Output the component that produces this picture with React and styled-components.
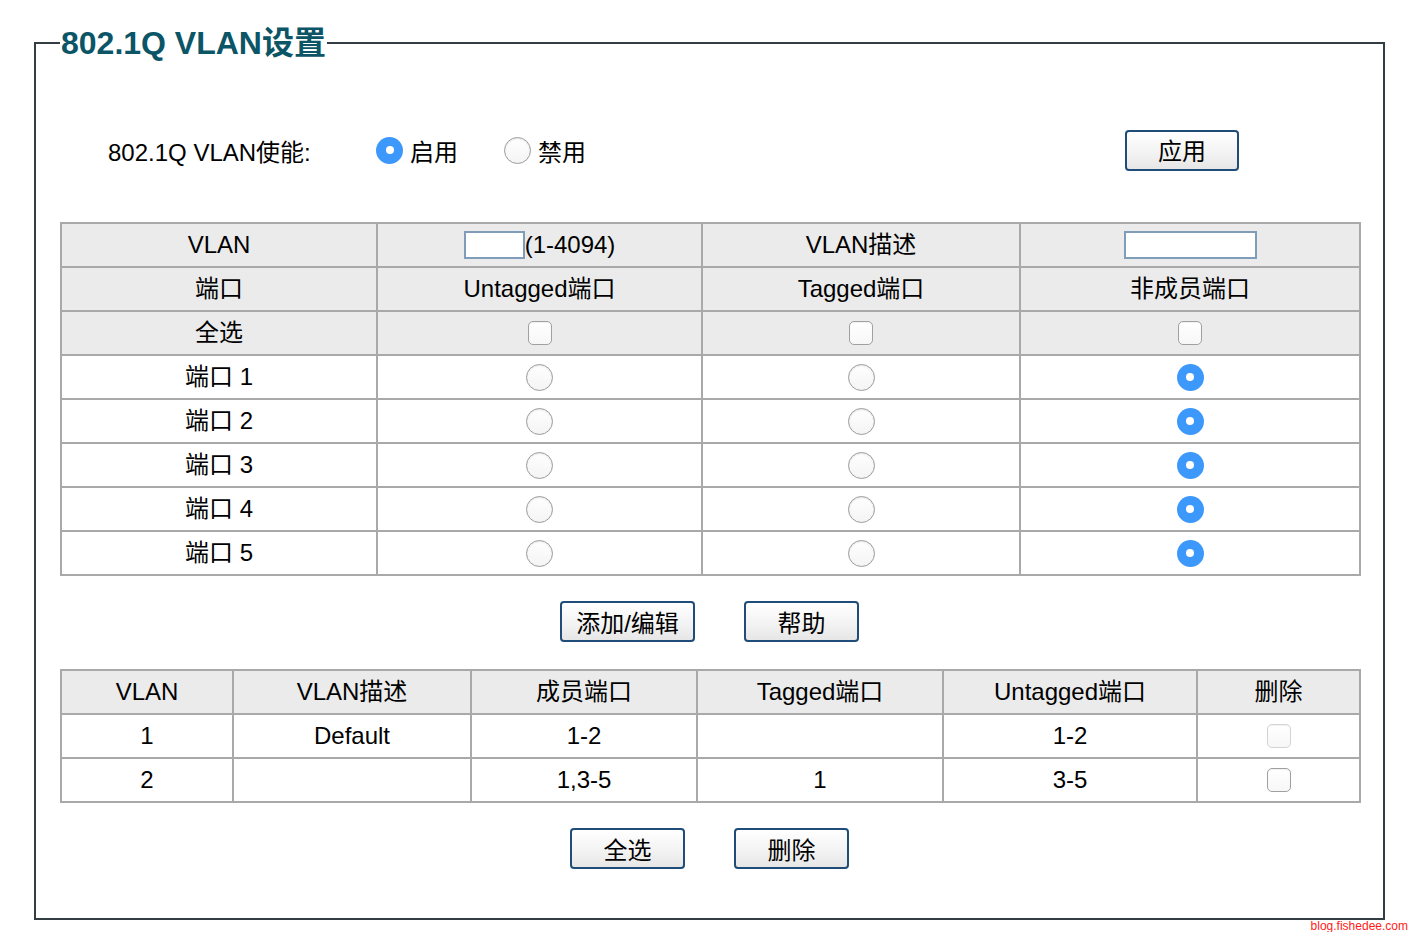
import React from "react";
import styled, { createGlobalStyle } from "styled-components";

const Global = createGlobalStyle`
  html, body { margin: 0; padding: 0; background: #fff; }
  body { font-family: "Liberation Sans", Arial, "Noto Sans CJK SC", sans-serif; color: #000; }
`;

const Page = styled.div`
  width: 1420px;
  padding-top: 23px;
`;

const Frame = styled.fieldset`
  margin: 0 0 0 34px;
  width: 1351px;
  box-sizing: border-box;
  border: 2px solid #333d42;
  padding: 0 24px 49px 24px;
  min-width: 0;
`;

const Legend = styled.legend`
  font-size: 32px;
  font-weight: bold;
  color: #0b5566;
  line-height: 40px;
  padding: 0 1px;
  margin-left: 0;
`;

const EnableRow = styled.div`
  display: flex;
  align-items: center;
  height: 44px;
  margin-top: 65px;
  padding-left: 48px;
  padding-right: 120px;
  font-size: 24px;
`;

const EnableLabel = styled.span`
  width: 268px;
`;

const Option = styled.label`
  display: flex;
  align-items: center;
  gap: 7px;
  width: 128px;
`;

const Spacer = styled.div`
  flex: 1;
`;

const Radio = styled.span`
  display: inline-block;
  box-sizing: border-box;
  width: 27px;
  height: 27px;
  border-radius: 50%;
  flex: none;
  position: relative;
  ${(p) =>
    p.$checked
      ? `
    background: #3d98fb;
    border: none;
    &::after {
      content: "";
      position: absolute;
      left: 50%;
      top: 50%;
      width: 8px;
      height: 8px;
      margin: -4px 0 0 -4px;
      border-radius: 50%;
      background: #fff;
    }
  `
      : `
    background: linear-gradient(#fff, #f4f4f4);
    border: 1.5px solid #9c9c9c;
    box-shadow: inset 0 1px 2px rgba(0,0,0,0.1);
  `}
`;

const Check = styled.span`
  display: inline-block;
  box-sizing: border-box;
  width: 24px;
  height: 24px;
  border-radius: 5px;
  background: linear-gradient(#fff, #f7f7f7);
  border: 1.5px solid ${(p) => (p.$disabled ? "#d4d4d4" : "#a0a0a0")};
  box-shadow: inset 0 1px 1px rgba(0,0,0,0.06);
  vertical-align: middle;
`;

const Button = styled.button`
  box-sizing: border-box;
  width: ${(p) => p.$w || 115}px;
  height: 41px;
  border: 2px solid #1f4c78;
  border-radius: 4px;
  background: linear-gradient(#ffffff, #f2f2f2 60%, #e6e6e6);
  font-family: "Liberation Sans", Arial, "Noto Sans CJK SC", sans-serif;
  font-size: 24px;
  color: #000;
  padding: 4px 0 0 0;
  line-height: 30px;
  cursor: pointer;
`;

const Table = styled.table`
  width: 100%;
  border-collapse: collapse;
  table-layout: fixed;
  font-size: 24px;
  margin-top: ${(p) => p.$mt}px;
`;

const Cell = styled.td`
  border: 2px solid #a9a9a9;
  height: 42px;
  padding: 0;
  text-align: center;
  vertical-align: middle;
  background: ${(p) => (p.$head ? "#ebebeb" : "#fff")};
  line-height: 26px;
`;

const CellInner = styled.div`
  display: flex;
  align-items: center;
  justify-content: center;
  height: 42px;
`;

const TextBox = styled.input`
  box-sizing: border-box;
  width: ${(p) => p.$w}px;
  height: 28px;
  border: 2px solid #7f9cb9;
  background: #fff;
  margin: 0;
  padding: 0;
  outline: none;
`;

const ButtonRow = styled.div`
  display: flex;
  justify-content: center;
  gap: 49px;
  margin-top: 25px;
`;

const Watermark = styled.div`
  text-align: right;
  padding-right: 12px;
  font-size: 12px;
  line-height: 12px;
  color: #ff1a1a;
`;

const ports = [1, 2, 3, 4, 5];

const vlans = [
  { id: "1", desc: "Default", members: "1-2", tagged: "", untagged: "1-2", disabled: true },
  { id: "2", desc: "", members: "1,3-5", tagged: "1", untagged: "3-5", disabled: false },
];

export default function App() {
  return (
    <Page>
      <Global />
      <Frame>
        <Legend>802.1Q VLAN设置</Legend>
        <EnableRow>
          <EnableLabel>802.1Q VLAN使能:</EnableLabel>
          <Option>
            <Radio $checked />
            启用
          </Option>
          <Option>
            <Radio />
            禁用
          </Option>
          <Spacer />
          <Button $w={114}>应用</Button>
        </EnableRow>

        <Table $mt={50}>
          <colgroup>
            <col style={{ width: 316 }} />
            <col style={{ width: 325 }} />
            <col style={{ width: 318 }} />
            <col style={{ width: 340 }} />
          </colgroup>
          <tbody>
            <tr>
              <Cell $head>VLAN</Cell>
              <Cell $head>
                <CellInner>
                  <TextBox $w={61} />
                  (1-4094)
                </CellInner>
              </Cell>
              <Cell $head>VLAN描述</Cell>
              <Cell $head>
                <CellInner>
                  <TextBox $w={133} />
                </CellInner>
              </Cell>
            </tr>
            <tr>
              <Cell $head>端口</Cell>
              <Cell $head>Untagged端口</Cell>
              <Cell $head>Tagged端口</Cell>
              <Cell $head>非成员端口</Cell>
            </tr>
            <tr>
              <Cell $head>全选</Cell>
              <Cell $head><CellInner><Check /></CellInner></Cell>
              <Cell $head><CellInner><Check /></CellInner></Cell>
              <Cell $head><CellInner><Check /></CellInner></Cell>
            </tr>
            {ports.map((p) => (
              <tr key={p}>
                <Cell>端口 {p}</Cell>
                <Cell><CellInner><Radio /></CellInner></Cell>
                <Cell><CellInner><Radio /></CellInner></Cell>
                <Cell><CellInner><Radio $checked /></CellInner></Cell>
              </tr>
            ))}
          </tbody>
        </Table>

        <ButtonRow>
          <Button $w={135}>添加/编辑</Button>
          <Button $w={115}>帮助</Button>
        </ButtonRow>

        <Table $mt={27}>
          <colgroup>
            <col style={{ width: 172 }} />
            <col style={{ width: 238 }} />
            <col style={{ width: 226 }} />
            <col style={{ width: 246 }} />
            <col style={{ width: 254 }} />
            <col style={{ width: 163 }} />
          </colgroup>
          <tbody>
            <tr>
              <Cell $head>VLAN</Cell>
              <Cell $head>VLAN描述</Cell>
              <Cell $head>成员端口</Cell>
              <Cell $head>Tagged端口</Cell>
              <Cell $head>Untagged端口</Cell>
              <Cell $head>删除</Cell>
            </tr>
            {vlans.map((v) => (
              <tr key={v.id}>
                <Cell>{v.id}</Cell>
                <Cell>{v.desc}</Cell>
                <Cell>{v.members}</Cell>
                <Cell>{v.tagged}</Cell>
                <Cell>{v.untagged}</Cell>
                <Cell><CellInner><Check $disabled={v.disabled} /></CellInner></Cell>
              </tr>
            ))}
          </tbody>
        </Table>

        <ButtonRow>
          <Button $w={115}>全选</Button>
          <Button $w={115}>删除</Button>
        </ButtonRow>
      </Frame>
      <Watermark>blog.fishedee.com</Watermark>
    </Page>
  );
}
